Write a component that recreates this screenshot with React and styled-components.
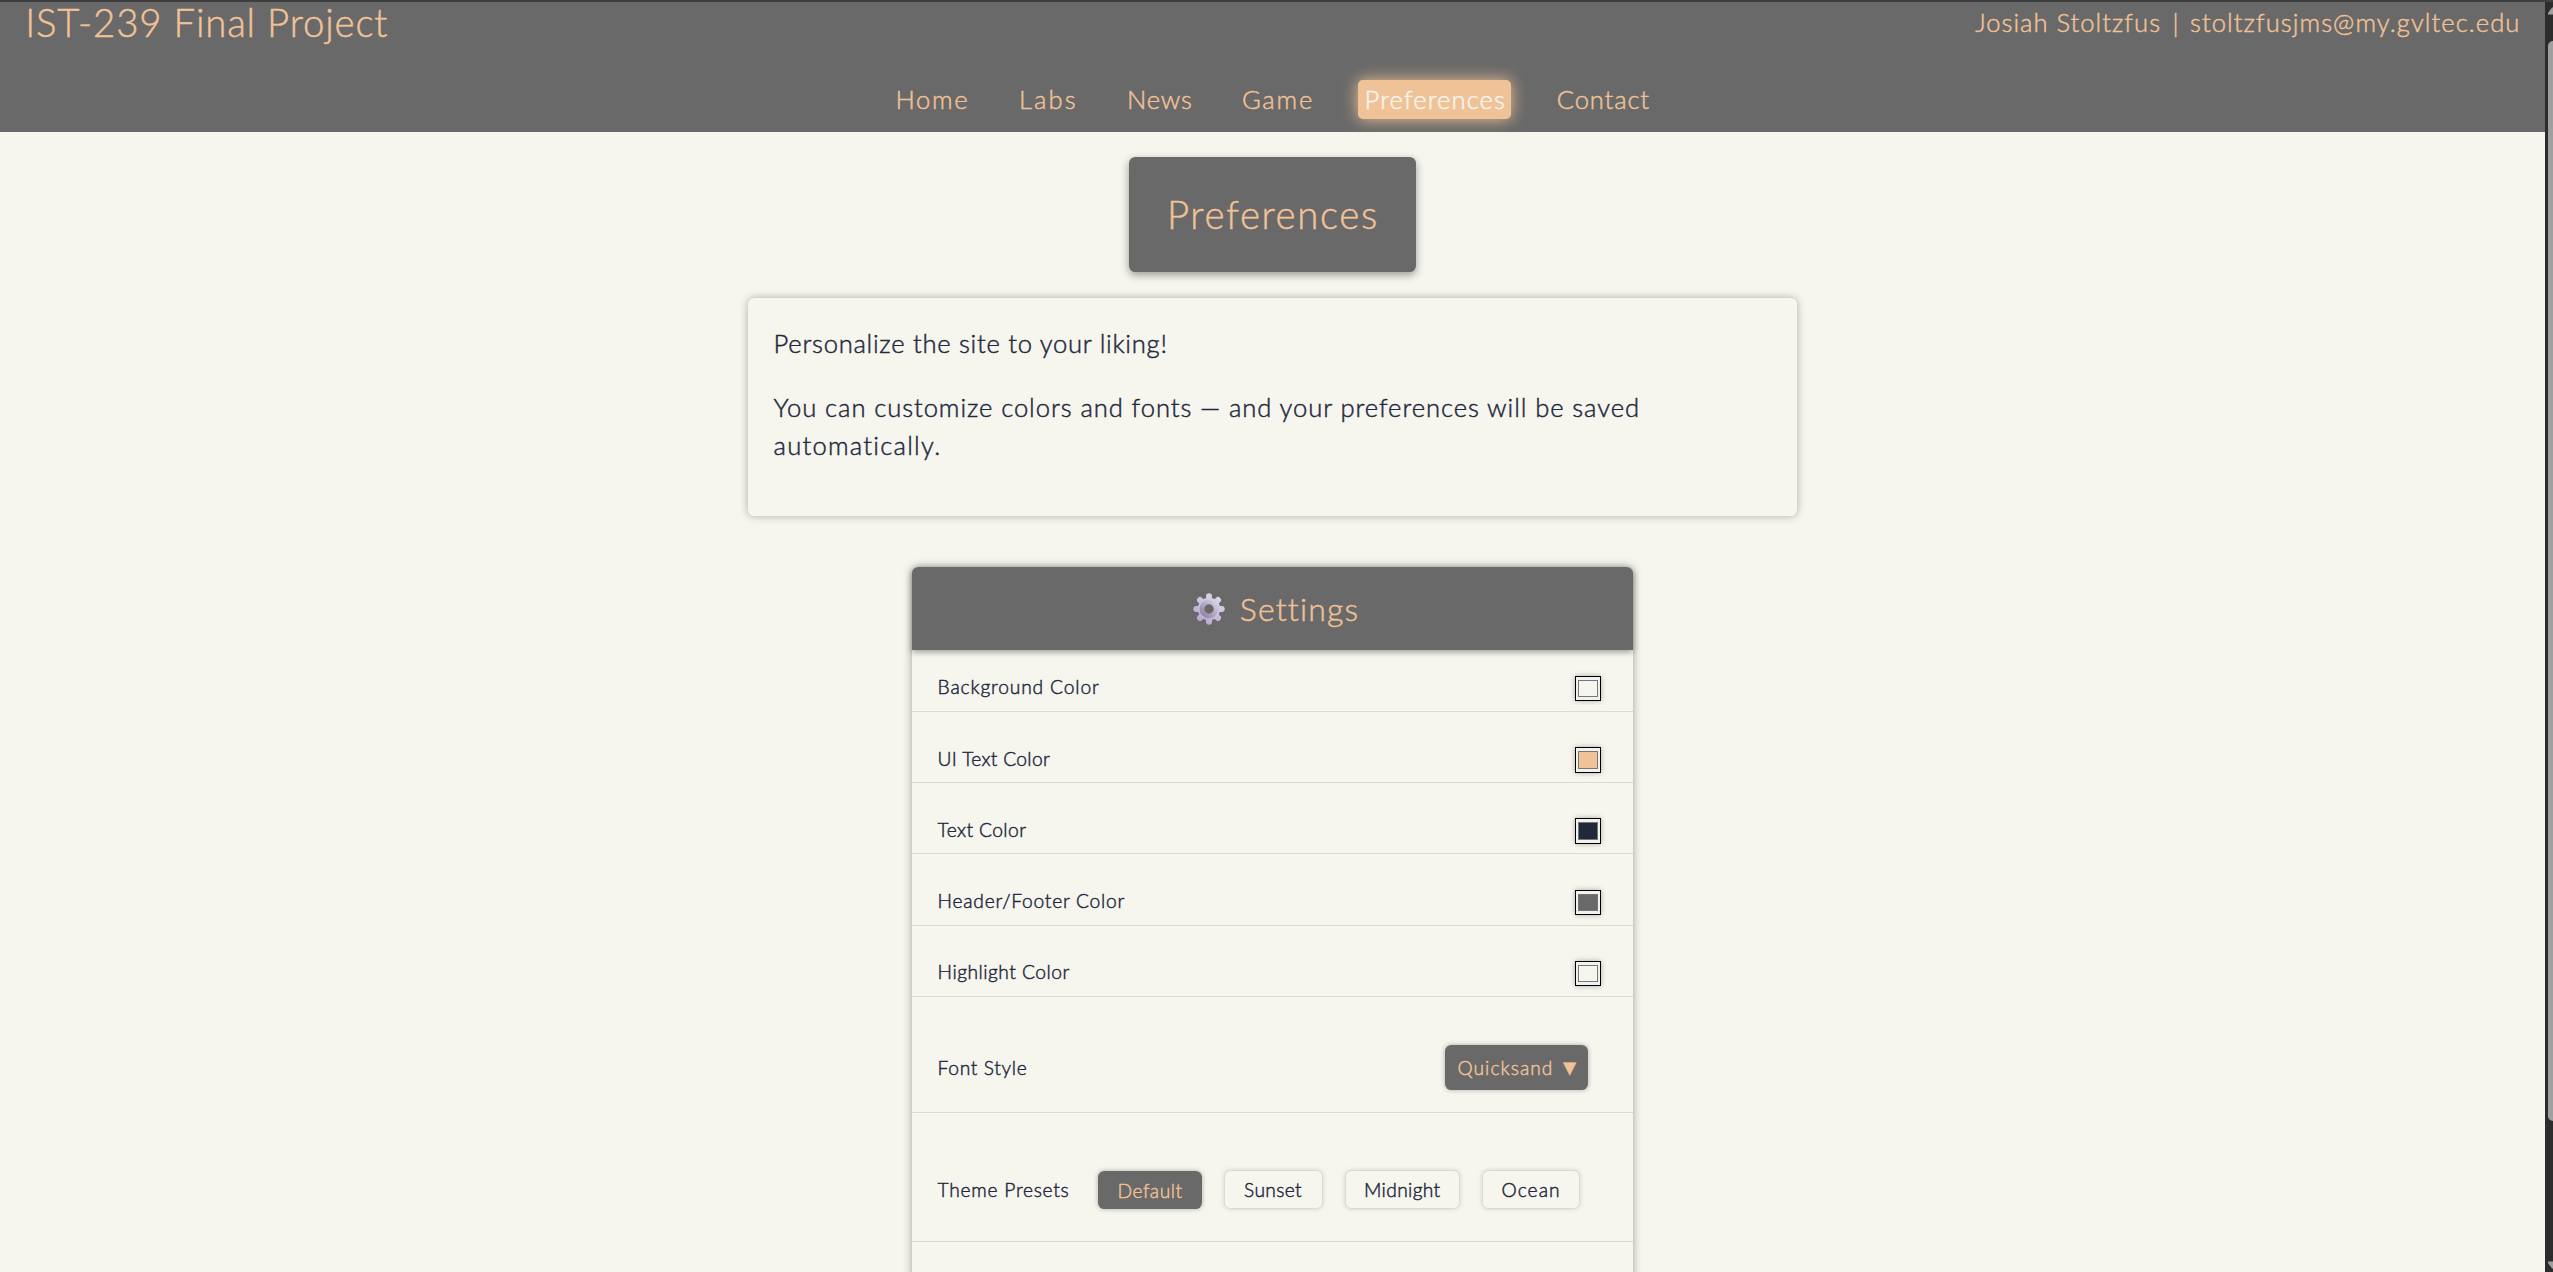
import React from "react";
import styled, { createGlobalStyle } from "styled-components";

const c = {
  page: "#f6f5ee",
  ui: "#f0c297",
  text: "#22283c",
  bar: "#696969",
  line: "#dadad6",
};

const GlobalStyle = createGlobalStyle`
  * { box-sizing: border-box; }
  body {
    margin: 0;
    overflow: hidden;
    background: ${c.page};
    color: ${c.text};
    font-family: Lato, "Open Sans", sans-serif;
    font-weight: 300;
    -webkit-text-stroke-width: 0.45px;
  }
`;

const Window = styled.div`
  display: grid;
  grid-template-columns: 1fr 8px;
  height: 1272px;
  padding-top: 2px;
  overflow: hidden;
  background: #3e3e3e;
`;

const Page = styled.div`
  height: 1270px;
  overflow: hidden;
  background: ${c.page};
`;

const Header = styled.header`
  height: 130px;
  background: ${c.bar};
  color: ${c.ui};
`;

const TopRow = styled.div`
  display: flex;
  justify-content: space-between;
  height: 40px;
  padding: 0 24.5px 0 25.2px;
  line-height: 40px;
`;

const SiteTitle = styled.div`
  font-size: 38.4px;
  letter-spacing: 0.81px;
`;

const Contact = styled.div`
  display: flex;
  gap: 11px;
  font-size: 25.6px;
`;

const Track = styled.span`
  white-space: pre;
  letter-spacing: ${(p) => p.$track}px;
`;

const Pipe = styled.span`
  width: 7px;
  text-align: center;
`;

const Nav = styled.nav`
  display: flex;
  justify-content: center;
  gap: 38.4px;
  padding-top: 38px;
`;

const NavLink = styled.a`
  width: ${(p) => p.$width}px;
  height: 39px;
  padding-left: ${(p) => (p.$active ? 6.4 : 7.2)}px;
  border-radius: 5px;
  font-size: 25.6px;
  line-height: 39px;
  letter-spacing: ${(p) => p.$track}px;
  color: ${(p) => (p.$active ? c.page : c.ui)};
  background: ${(p) => (p.$active ? c.ui : "transparent")};
  box-shadow: ${(p) => (p.$active ? `0 0 16px ${c.ui}` : "none")};
`;

const Main = styled.main`
  display: flex;
  flex-direction: column;
  align-items: center;
  padding-top: 25px;
`;

const PageTitle = styled.h1`
  width: 287px;
  height: 115px;
  margin: 0 0 26px;
  padding-left: 38px;
  border-radius: 6.4px;
  background: ${c.bar};
  color: ${c.ui};
  box-shadow: 0 3px 9px rgba(0, 0, 0, 0.38);
  font-size: 38.4px;
  font-weight: 300;
  line-height: 115px;
  letter-spacing: 1.6px;
`;

const Intro = styled.section`
  width: 1049px;
  height: 218px;
  margin-bottom: 51px;
  padding: 25.6px;
  border-radius: 6.4px;
  box-shadow: 0 0 8px rgba(0, 0, 0, 0.3);
  font-size: 25.6px;
  line-height: 38.4px;
`;

const Paragraph = styled.p`
  margin: 0 0 25.6px;
`;

const Panel = styled.section`
  width: 721px;
  height: 800px;
  border-radius: 6.4px;
  box-shadow: 0 0 10px rgba(0, 0, 0, 0.35);
`;

const PanelHeader = styled.h2`
  display: flex;
  justify-content: center;
  align-items: center;
  gap: 15px;
  height: 83px;
  margin: 0;
  padding-left: 7px;
  border-radius: 6.4px 6.4px 0 0;
  background: ${c.bar};
  color: ${c.ui};
  box-shadow: 0 2px 6px rgba(0, 0, 0, 0.38);
  font-size: 32px;
  font-weight: 300;
  line-height: 81px;
  letter-spacing: 1.145px;
`;

const Row = styled.div`
  display: flex;
  justify-content: space-between;
  align-items: flex-end;
  height: ${(p) => p.$height}px;
  padding: 0 ${(p) => p.$right}px ${(p) => p.$bottom}px 25.6px;
  border-bottom: 1px solid ${c.line};
  font-size: 19.2px;
`;

const Label = styled.span`
  line-height: ${(p) => p.$line}px;
  letter-spacing: ${(p) => p.$track}px;
  white-space: nowrap;
`;

const Swatch = styled.span`
  display: block;
  width: 26px;
  height: 25.4px;
  padding: 3px 2px;
  border: 1px solid #000;
  background: #f1f1f0;
  box-shadow: 0 0 5px rgba(0, 0, 0, 0.3);
`;

const SwatchFill = styled.span`
  display: block;
  height: 100%;
  border: 1px solid #767676;
  background: ${(p) => p.$color};
`;

const Dropdown = styled.button`
  display: flex;
  align-items: center;
  gap: 5.5px;
  width: 143px;
  height: 45px;
  padding: 0 0 0 12.4px;
  border: 0;
  border-radius: 6.4px;
  background: ${c.bar};
  color: ${c.ui};
  box-shadow: 0 0 5px rgba(0, 0, 0, 0.3);
  font: inherit;
  -webkit-text-stroke: inherit;
`;

const Caret = styled.span`
  font-family: "DejaVu Sans", sans-serif;
  font-size: 21.5px;
  line-height: 45px;
`;

const Presets = styled.div`
  display: flex;
  align-items: flex-end;
  gap: 22px;
`;

const Preset = styled.button`
  width: ${(p) => p.$width}px;
  height: ${(p) => (p.$active ? 38 : 39.4)}px;
  padding: 0 0 0 ${(p) => p.$pad}px;
  border: ${(p) => (p.$active ? "0" : `1px solid ${c.line}`)};
  border-radius: 6.4px;
  background: ${(p) => (p.$active ? c.bar : c.page)};
  color: ${(p) => (p.$active ? c.ui : c.text)};
  box-shadow: 0 0 5px rgba(0, 0, 0, ${(p) => (p.$active ? 0.3 : 0.14)});
  font: inherit;
  text-align: left;
  letter-spacing: ${(p) => p.$track}px;
  -webkit-text-stroke: inherit;
`;

const Scrollbar = styled.div`
  display: flex;
  flex-direction: column;
  justify-content: space-between;
  align-items: flex-end;
  height: 1270px;
  padding: 5px 0 3px 3px;
  overflow: hidden;
  background: #2c2c2c;
`;

const Thumb = styled.div`
  width: 5px;
  height: 1080px;
  margin: 26px 0 auto;
  border-radius: 5px 0 0 5px;
  background: #9f9f9f;
`;

const links = [
  ["Home", 85, 1.6],
  ["Labs", 69.6, 2.1],
  ["News", 76.5, 0.8],
  ["Game", 85.1, 1.8],
  ["Preferences", 153, 1.08],
  ["Contact", 107, 0.85],
];

const colors = [
  ["Background Color", 0.86, c.page],
  ["UI Text Color", 0.33, c.ui],
  ["Text Color", 0.41, c.text],
  ["Header/Footer Color", 0.76, c.bar],
  ["Highlight Color", 0.5, c.page],
];

const presets = [
  ["Default", 104, 19.5, 0.51],
  ["Sunset", 99, 19, 0.35],
  ["Midnight", 115, 18, 0.34],
  ["Ocean", 98, 18.5, 1.1],
];

function Gear() {
  const teeth = [0, 45, 90, 135, 180, 225, 270, 315];
  return (
    <svg width="32" height="32" viewBox="0 0 32 32">
      <defs>
        <linearGradient id="body" gradientUnits="userSpaceOnUse" x1="25" y1="3" x2="8" y2="29">
          <stop offset="0" stopColor="#dcd6e6" />
          <stop offset="1" stopColor="#b8a9d3" />
        </linearGradient>
        <linearGradient id="ring" x1="1" y1="0" x2="0" y2="1">
          <stop offset="0" stopColor="#d6cfe0" />
          <stop offset="1" stopColor="#8d829f" />
        </linearGradient>
      </defs>
      <g stroke="url(#body)" strokeLinecap="round" strokeWidth="6">
        {teeth.map((a) => {
          const r = (a * Math.PI) / 180;
          return (
            <line
              key={a}
              x1={16 + 9 * Math.cos(r)}
              y1={16 + 9 * Math.sin(r)}
              x2={16 + 12.7 * Math.cos(r)}
              y2={16 + 12.71 * Math.sin(r)}
            />
          );
        })}
      </g>
      <circle cx="16" cy="16" r="8.7" fill="none" stroke="url(#body)" strokeWidth="5" />
      <circle cx="16" cy="16" r="7" fill="none" stroke="url(#ring)" strokeWidth="4.6" />
    </svg>
  );
}

export default function App() {
  return (
    <>
      <GlobalStyle />
      <Window>
        <Page>
          <Header>
            <TopRow>
              <SiteTitle>IST-239 Final Project</SiteTitle>
              <Contact>
                <Track $track={1}>Josiah Stoltzfus</Track>
                <Pipe>|</Pipe>
                <Track $track={1.05}>stoltzfusjms@my.gvltec.edu</Track>
              </Contact>
            </TopRow>
            <Nav>
              {links.map(([name, width, track]) => (
                <NavLink key={name} $width={width} $track={track} $active={name === "Preferences"}>
                  {name}
                </NavLink>
              ))}
            </Nav>
          </Header>
          <Main>
            <PageTitle>Preferences</PageTitle>
            <Intro>
              <Paragraph>
                <Track $track={0.726}>Personalize the site to your liking!</Track>
              </Paragraph>
              <Paragraph>
                <Track $track={0.92}>
                  You can customize colors and fonts — and your preferences will be saved
                </Track>
                <br />
                <Track $track={1.235}>automatically.</Track>
              </Paragraph>
            </Intro>
            <Panel>
              <PanelHeader>
                <Gear />
                Settings
              </PanelHeader>
              {colors.map(([name, track, color], i) => (
                <Row key={name} $height={i ? 71.2 : 62} $right={32} $bottom={9.6}>
                  <Label $line={28} $track={track}>{name}</Label>
                  <Swatch>
                    <SwatchFill $color={color} />
                  </Swatch>
                </Row>
              ))}
              <Row $height={116.2} $right={45} $bottom={22}>
                <Label $line={45} $track={0.65}>Font Style</Label>
                <Dropdown>
                  <Track $track={1.06}>Quicksand</Track>
                  <Caret>▼</Caret>
                </Dropdown>
              </Row>
              <Row $height={129} $right={53} $bottom={31.6}>
                <Label $line={38} $track={0.75}>Theme Presets</Label>
                <Presets>
                  {presets.map(([name, width, pad, track], i) => (
                    <Preset key={name} $width={width} $pad={pad} $track={track} $active={i === 0}>
                      {name}
                    </Preset>
                  ))}
                </Presets>
              </Row>
            </Panel>
          </Main>
        </Page>
        <Scrollbar>
          <svg width="5" height="8" viewBox="0 0 5 8">
            <path d="M0 7.5V6L4 .5H5V7.5Z" fill="#9f9f9f" />
          </svg>
          <Thumb />
          <svg width="5" height="8" viewBox="0 0 5 8">
            <path d="M0 .5V2L4 7.5H5V.5Z" fill="#9f9f9f" />
          </svg>
        </Scrollbar>
      </Window>
    </>
  );
}
